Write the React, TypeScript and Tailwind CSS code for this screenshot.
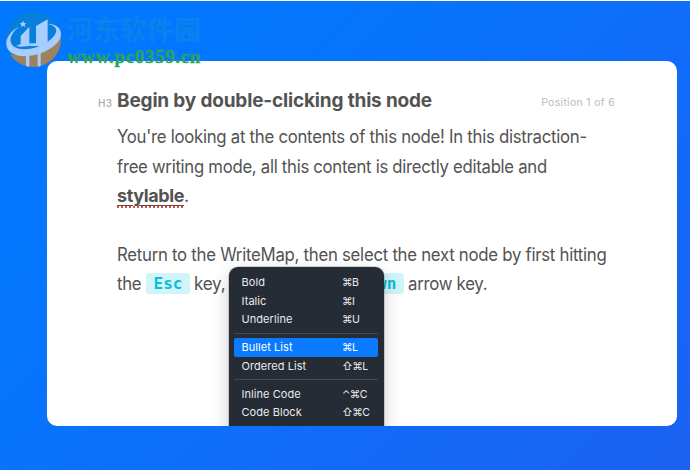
import React from 'react';

type Item = { label: string; keys: string; active?: boolean };

const groups: Item[][] = [
  [
    { label: 'Bold', keys: '⌘B' },
    { label: 'Italic', keys: '⌘I' },
    { label: 'Underline', keys: '⌘U' },
  ],
  [
    { label: 'Bullet List', keys: '⌘L', active: true },
    { label: 'Ordered List', keys: '⇧⌘L' },
  ],
  [
    { label: 'Inline Code', keys: '⌃⌘C' },
    { label: 'Code Block', keys: '⇧⌘C' },
  ],
];

function FormatMenu() {
  return (
    <div className="absolute left-[181.5px] top-[206px] h-[180px] w-[155px] rounded-t-[9px] bg-[#262c35] px-[5.5px] pt-[6px] text-[11px] text-[#e9eaeb] shadow-[0_0_0_0.5px_rgba(0,0,0,0.3),0_6px_18px_rgba(0,0,0,0.2)]">
      {groups.map((group, i) => (
        <div key={i} className="mb-[4px] border-b border-[#454a52] pb-[4px]">
          {group.map((item) => (
            <div
              key={item.label}
              className={`flex h-[18.7px] items-center rounded-[2px] pl-[7.5px] ${item.active ? 'bg-[#0a7aff] text-white' : ''}`}
            >
              <span className="w-[100.5px] whitespace-nowrap tracking-[0.06px]">{item.label}</span>
              <span className="origin-left scale-x-[0.96] whitespace-nowrap tracking-[-0.6px]">{item.keys}</span>
            </div>
          ))}
        </div>
      ))}
    </div>
  );
}

function Watermark() {
  return (
    <div className="absolute left-0 top-0 h-[75px] w-[220px]">
      <svg className="absolute left-[4px] top-[9px]" width="60" height="60" viewBox="12 30 180 180">
        <defs>
          <clipPath id="disc"><circle cx="100" cy="118" r="83" /></clipPath>
        </defs>
        <g clipPath="url(#disc)">
          <rect x="10" y="30" width="180" height="180" fill="#087fdc" />
          <path d="M15 158C70 178 150 155 190 95V210H15Z" fill="#a0815f" />
          <path d="M78 155H88V210H78ZM113 155H122V210H113Z" fill="#a7ceff" />
        </g>
        <path d="M48 138L62 132V108L88 80V138L62 140Z" fill="#a7ceff" />
        <path d="M108 78L143 58V126L124 138H88V130H108Z" fill="#a7ceff" />
        <path d="M58 80C18 98 5 140 36 160C75 182 155 160 179 118C192 88 170 70 140 71C168 75 176 90 162 108C134 142 72 158 42 140C22 126 32 98 58 80Z" fill="#a7ceff" />
        <path d="M69 62L72 69L79 70L74 74L76 81L69 77L63 81L64 74L59 70L66 69Z" fill="#a7ceff" />
      </svg>
      <div className="absolute left-[66px] top-[10px] whitespace-nowrap font-['Noto_Sans_CJK_SC',sans-serif] text-[27px] font-bold leading-[36px] text-[#0a82ee]">河东软件园</div>
      <div className="absolute left-[67px] top-[46px] whitespace-nowrap font-['Liberation_Serif',serif] text-[19px] font-bold leading-[20px] tracking-[0.65px] text-[#2ba35c] [-webkit-text-stroke:0.4px_#2ba35c]">www.pc0359.cn</div>
    </div>
  );
}

export default function App() {
  return (
    <div className="relative h-[470px] w-[690px] overflow-hidden border-t border-white bg-[linear-gradient(135deg,#0078ff_0%,#0477ff_25%,#0f6dfa_60%,#1c61f0_100%)] pl-[47px] pt-[60px] font-[Inter,sans-serif] text-[#535353]">
      <main className="relative h-[365px] w-[630px] overflow-hidden rounded-[10px] bg-white pl-[70px] pt-[25px]">
        <header className="-ml-[19px] flex h-[30px] w-[517px] items-center">
          <span className="mt-[5px] w-[19px] text-[10px] font-medium tracking-[0.4px] text-[#aaa]">H3</span>
          <h1 className="whitespace-nowrap text-[19px] font-bold tracking-[-0.17px]">Begin by double-clicking this node</h1>
          <span className="ml-auto mt-[4px] whitespace-nowrap text-[10.500px] tracking-[0.3px] text-[#bbb]">Position 1 of 6</span>
        </header>
        <div className="mt-[6px] whitespace-nowrap text-[18px] leading-[29.500px] tracking-[-0.3px]">
          <p className="origin-left scale-x-[0.932]">You're looking at the contents of this node! In this distraction-</p>
          <p className="origin-left scale-x-[0.928]">free writing mode, all this content is directly editable and</p>
          <p>
            <span className="underline decoration-[#e04848] decoration-dotted decoration-[1.5px] underline-offset-[4px]">
              <b className="tracking-[-0.4px] underline decoration-[#505050] decoration-solid decoration-[1px] underline-offset-[3px]">stylable</b>
            </span>.
          </p>
          <p className="mt-[29px] origin-left scale-x-[0.933]">Return to the WriteMap, then select the next node by first hitting</p>
          <p className="flex items-center">
            <span className="w-[29px] origin-left scale-x-[0.93]">the</span>
            <code className="flex h-[21px] w-[44px] items-center justify-center rounded-[3px] bg-[#d1f4f8] font-['DejaVu_Sans_Mono',monospace] text-[16px] font-bold tracking-normal text-[#08bfd8]">Esc</code>
            <span className="ml-[4px] w-[156px] origin-left scale-x-[0.95]">key,</span>
            <code className="flex h-[21px] w-[54px] items-center justify-center rounded-[3px] bg-[#d1f4f8] font-['DejaVu_Sans_Mono',monospace] text-[16px] font-bold tracking-normal text-[#08bfd8]">Down</code>
            <span className="ml-[4px] origin-left scale-x-[0.933]">arrow key.</span>
          </p>
        </div>
        <FormatMenu />
      </main>
      <Watermark />
    </div>
  );
}
